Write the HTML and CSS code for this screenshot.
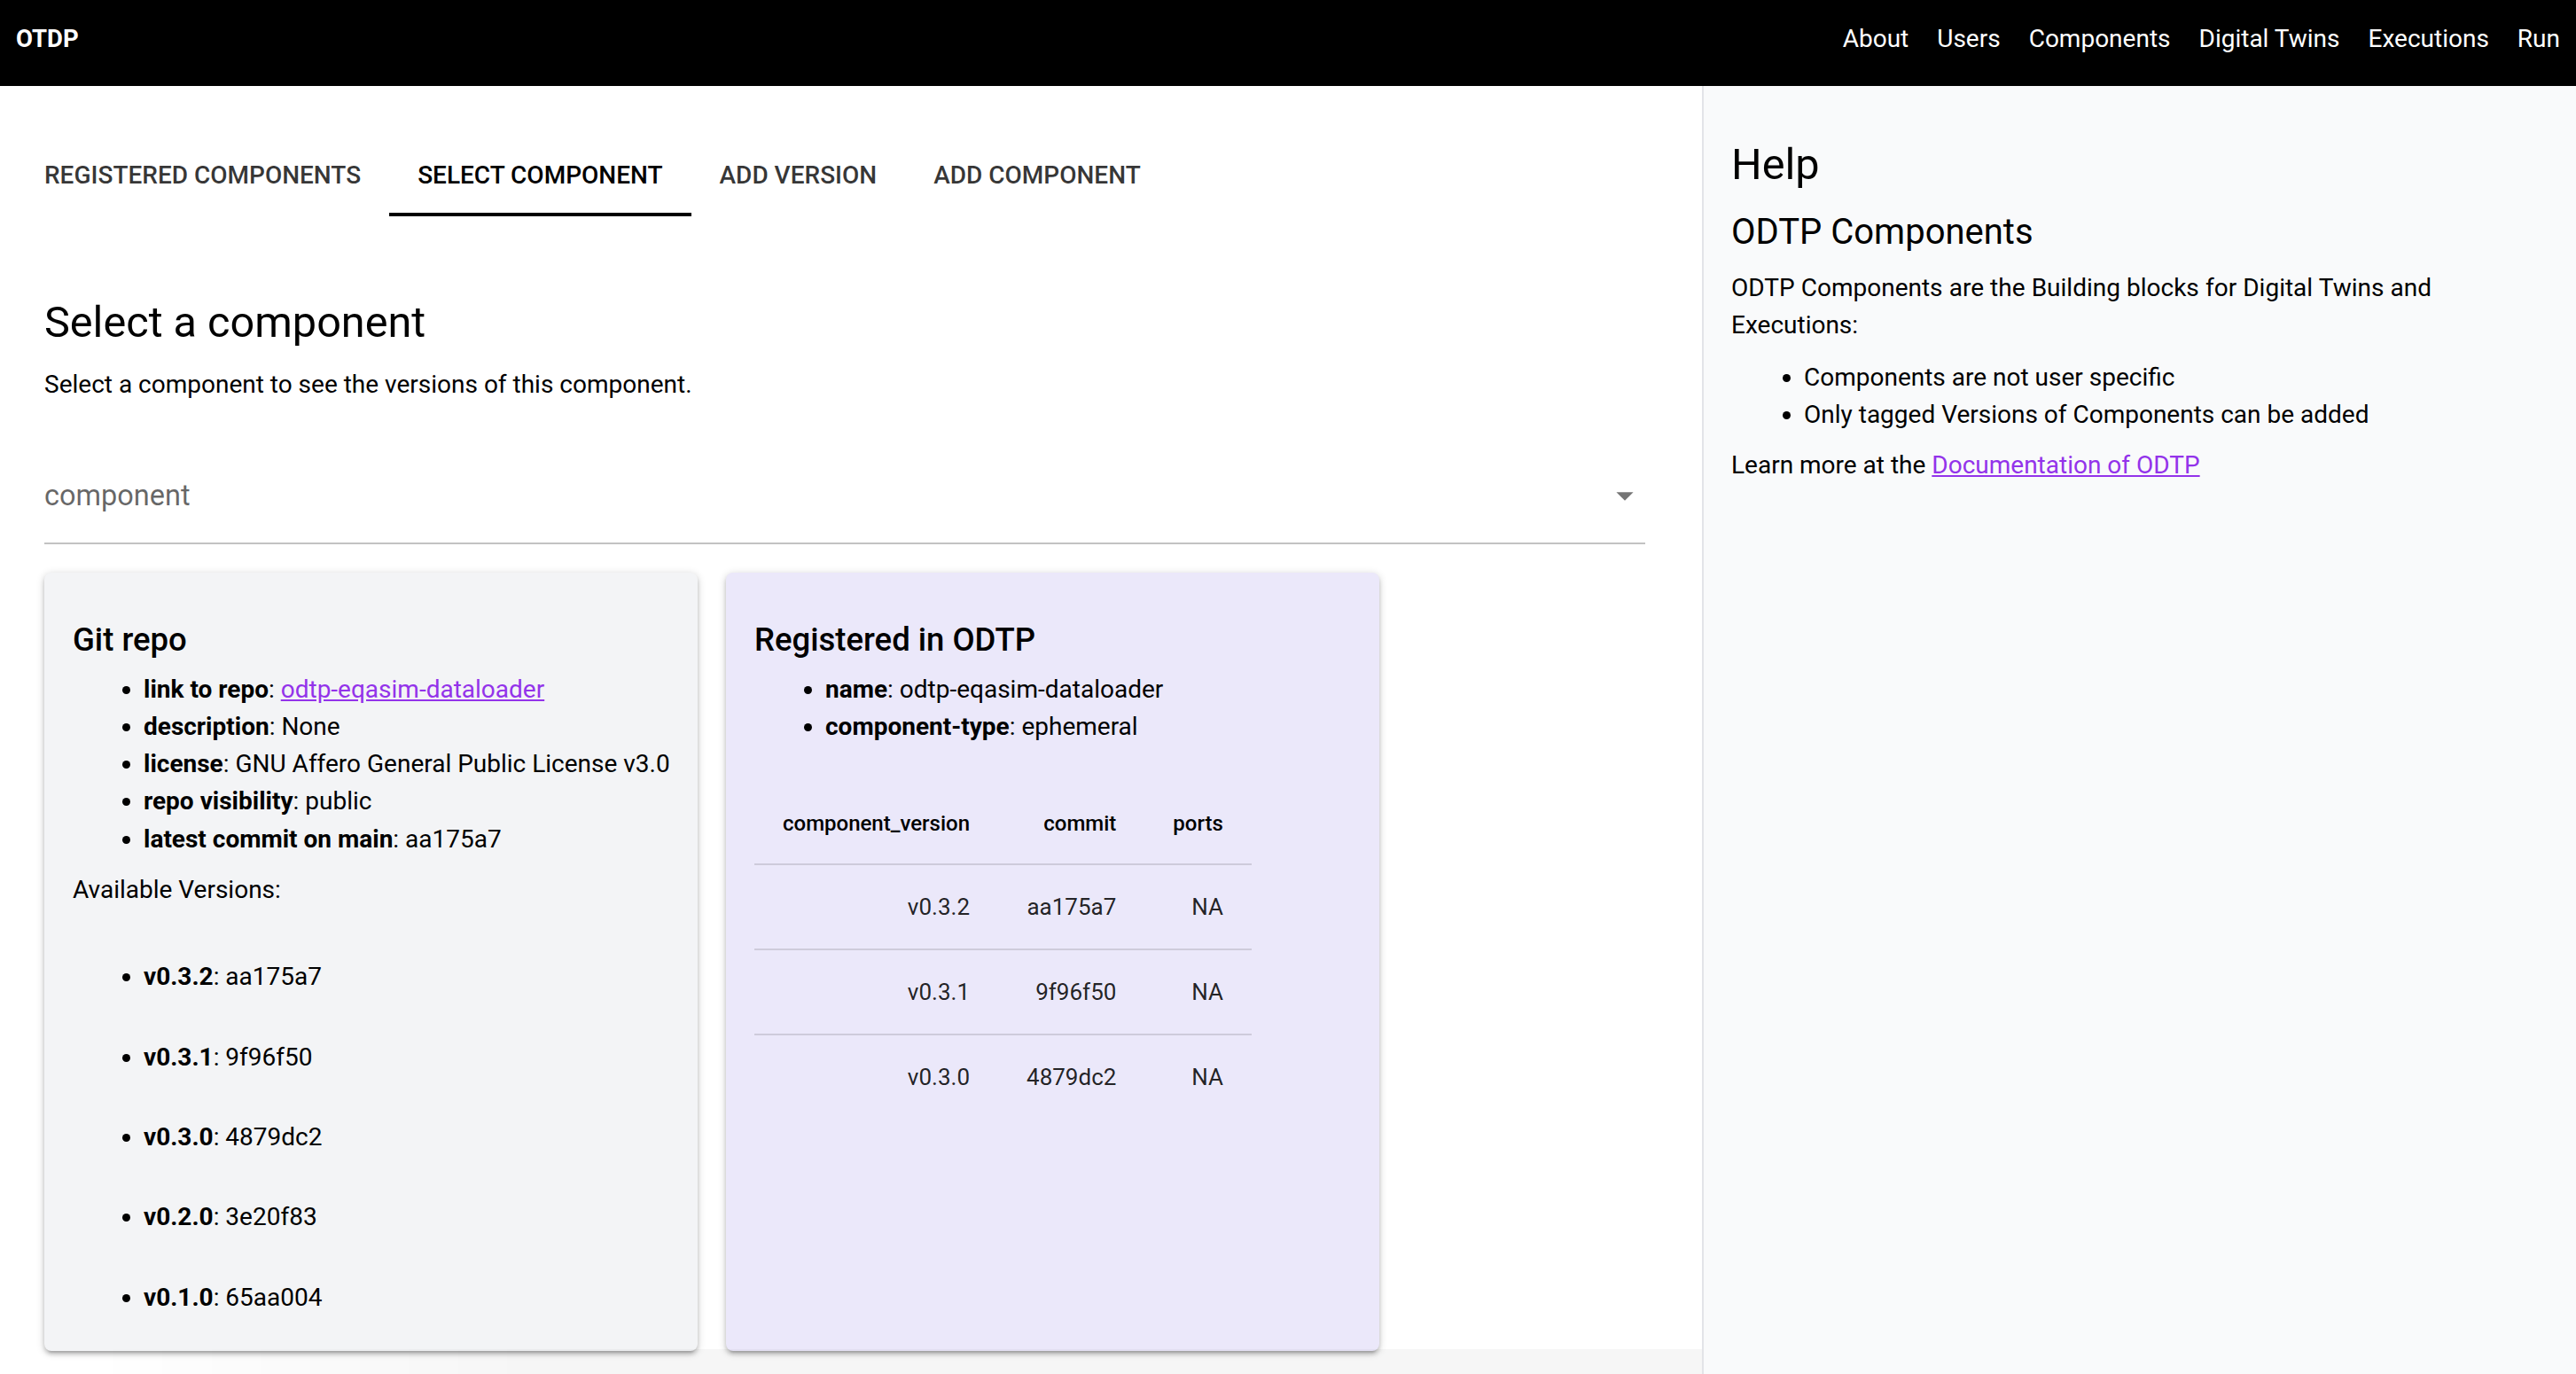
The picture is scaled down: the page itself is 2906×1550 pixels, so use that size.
FILE: index.html
```html
<!DOCTYPE html>
<html lang="en">
<head>
<meta charset="utf-8">
<title>OTDP</title>
<link rel="stylesheet" href="styles.css">
</head>
<body>
<header class="topbar">
  <div class="brand">OTDP</div>
  <nav class="topnav">
    <a class="navlink">About</a>
    <a class="navlink">Users</a>
    <a class="navlink">Components</a>
    <a class="navlink">Digital Twins</a>
    <a class="navlink">Executions</a>
    <a class="navlink">Run</a>
  </nav>
</header>
<div class="layout">
  <main class="main">
    <div class="tabs">
      <div class="tab">REGISTERED COMPONENTS</div>
      <div class="tab active">SELECT COMPONENT</div>
      <div class="tab">ADD VERSION</div>
      <div class="tab">ADD COMPONENT</div>
    </div>
    <section class="panel">
      <h1 class="title">Select a component</h1>
      <p class="subtitle">Select a component to see the versions of this component.</p>
      <div class="select">
        <span class="placeholder">component</span>
        <svg class="caret" viewBox="0 0 24 24"><path d="M7 10l5 5 5-5z"/></svg>
      </div>
      <div class="cards">
        <div class="card card-git">
          <h2 class="card-title">Git repo</h2>
          <ul class="props">
            <li><b>link to repo</b>: <a class="link">odtp-eqasim-dataloader</a></li>
            <li><b>description</b>: None</li>
            <li><b>license</b>: GNU Affero General Public License v3.0</li>
            <li><b>repo visibility</b>: public</li>
            <li><b>latest commit on main</b>: aa175a7</li>
          </ul>
          <p class="avail">Available Versions:</p>
          <ul class="props versions">
            <li><b>v0.3.2</b>: aa175a7</li>
            <li><b>v0.3.1</b>: 9f96f50</li>
            <li><b>v0.3.0</b>: 4879dc2</li>
            <li><b>v0.2.0</b>: 3e20f83</li>
            <li><b>v0.1.0</b>: 65aa004</li>
          </ul>
        </div>
        <div class="card card-reg">
          <h2 class="card-title">Registered in ODTP</h2>
          <ul class="props">
            <li><b>name</b>: odtp-eqasim-dataloader</li>
            <li><b>component-type</b>: ephemeral</li>
          </ul>
          <table class="vtable">
            <thead>
              <tr><th>component_version</th><th>commit</th><th>ports</th></tr>
            </thead>
            <tbody>
              <tr><td>v0.3.2</td><td>aa175a7</td><td>NA</td></tr>
              <tr><td>v0.3.1</td><td>9f96f50</td><td>NA</td></tr>
              <tr><td>v0.3.0</td><td>4879dc2</td><td>NA</td></tr>
            </tbody>
          </table>
        </div>
      </div>
    </section>
  </main>
  <aside class="help">
    <div class="help-body">
      <h1 class="help-title">Help</h1>
      <h2 class="help-sub">ODTP Components</h2>
      <p class="help-text justified">ODTP Components are the Building blocks for Digital Twins and Executions:</p>
      <ul class="help-list">
        <li>Components are not user specific</li>
        <li>Only tagged Versions of Components can be added</li>
      </ul>
      <p class="help-text learn">Learn more at the <a class="link">Documentation of ODTP</a></p>
    </div>
  </aside>
</div>
<div class="bottom-fade"></div>
</body>
</html>
```

FILE: styles.css
```css
html, body {
  margin: 0;
  height: 100%;
  overflow: hidden;
}

body {
  font-family: Roboto, "Noto Sans", sans-serif;
  color: #000;
  background: #fff;
}

.topbar {
  height: 97px;
  box-sizing: border-box;
  background: #000;
  color: #fff;
  display: flex;
  justify-content: space-between;
  align-items: baseline;
  padding: 27px 18px 0 18px;
}

.brand {
  font-size: 27.5px;
  font-weight: 700;
}

.topnav {
  display: flex;
  gap: 32px;
  font-size: 28px;
}

.navlink {
  color: #fff;
}

.layout {
  display: flex;
  height: calc(100% - 97px);
}

.main {
  width: 1920px;
  flex: none;
  box-sizing: border-box;
  padding: 53px 32px 0 18px;
}

.tabs {
  display: flex;
  height: 94px;
}

.tab {
  position: relative;
  padding: 0 32px;
  display: flex;
  align-items: center;
  font-size: 28px;
  font-weight: 500;
  color: rgba(0, 0, 0, 0.8);
}

.tab.active {
  color: #000;
}

.tab.active::after {
  content: "";
  position: absolute;
  left: 0;
  right: 0;
  bottom: 0;
  height: 4px;
  background: #000;
}

.panel {
  padding: 0 32px;
}

.title {
  margin: 91px 0 0;
  font-size: 48.6px;
  font-weight: 400;
  line-height: 57.6px;
}

.subtitle {
  margin: 20px 0 0;
  font-size: 28px;
  line-height: 42px;
}

.select {
  margin-top: 51px;
  height: 106px;
  border-bottom: 2px solid rgba(0, 0, 0, 0.24);
  display: flex;
  align-items: center;
  justify-content: space-between;
}

.placeholder {
  font-size: 32.5px;
  color: rgba(0, 0, 0, 0.6);
}

.caret {
  width: 46px;
  height: 46px;
  fill: rgba(0, 0, 0, 0.54);
}

.cards {
  display: flex;
  gap: 32px;
  margin-top: 32px;
  align-items: stretch;
}

.card {
  width: 737px;
  box-sizing: border-box;
  padding: 55px 20px 39px 32px;
  border-radius: 8px;
  box-shadow: 0 2px 10px rgba(0, 0, 0, 0.2), 0 4px 4px rgba(0, 0, 0, 0.14), 0 6px 2px -4px rgba(0, 0, 0, 0.12);
}

.card-git {
  background: #f3f4f6;
}

.card-reg {
  background: #ebe8fa;
}

.card-title {
  margin: 0;
  font-size: 36.5px;
  font-weight: 500;
  line-height: 42px;
}

.props {
  margin: 14px 0 0;
  padding-left: 80px;
  font-size: 28px;
  line-height: 42.3px;
}

.props li {
  white-space: nowrap;
}

.props b {
  font-weight: 700;
}

.avail {
  margin: 15px 0 0;
  font-size: 28px;
  line-height: 42.3px;
}

.versions {
  margin-top: 56px;
}

.versions li + li {
  margin-top: 48px;
}

.link {
  color: #9333ea;
  text-decoration: underline;
}

.vtable {
  margin-top: 42px;
  border-collapse: separate;
  border-spacing: 0;
}

.vtable th {
  height: 91px;
  padding: 0 32px;
  font-size: 24px;
  font-weight: 500;
  text-align: right;
  border-bottom: 2px solid rgba(0, 0, 0, 0.12);
}

.vtable td {
  height: 94px;
  padding: 0 32px;
  font-size: 26px;
  text-align: right;
  color: rgba(0, 0, 0, 0.87);
}

.vtable tbody tr:not(:last-child) td {
  border-bottom: 2px solid rgba(0, 0, 0, 0.12);
}

.help {
  flex: 1;
  background: #f9fafb;
  border-left: 2px solid #e3e4e8;
  padding: 60px 30px 0 31px;
}

.help-body {
  max-width: 790px;
}

.help-title {
  margin: 0;
  font-size: 48.6px;
  font-weight: 400;
  line-height: 57.6px;
}

.help-sub {
  margin: 24px 0 0;
  font-size: 40px;
  font-weight: 400;
  line-height: 45.6px;
}

.help-text {
  margin: 20px 0 0;
  font-size: 28px;
  line-height: 42px;
}

.help-text.justified {
  text-align: justify;
}

.help-list {
  margin: 17px 0 0;
  padding-left: 82px;
  font-size: 28px;
  line-height: 41.5px;
}

.help-text.learn {
  margin-top: 16px;
}

.bottom-fade {
  position: fixed;
  left: 0;
  bottom: 0;
  width: 1920px;
  height: 28px;
  background: linear-gradient(to right, rgba(0, 0, 0, 0) 100px, rgba(0, 0, 0, 0.035) 600px);
  pointer-events: none;
}
```
